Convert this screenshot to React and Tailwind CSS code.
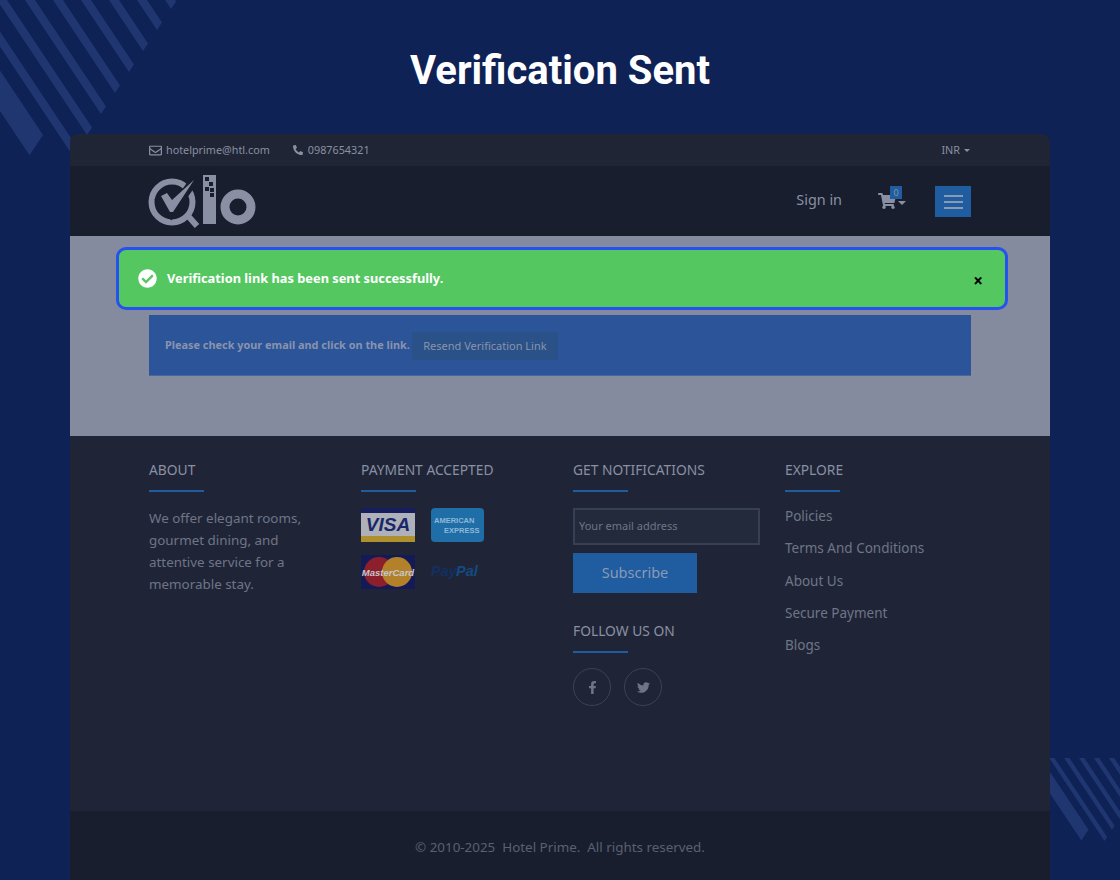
import { FaRegEnvelope, FaPhoneAlt, FaShoppingCart, FaFacebookF, FaTwitter, FaCheckCircle } from 'react-icons/fa'

const bodyFont = { fontFamily: "'Noto Sans', sans-serif" }

// stripes of the corner decoration: [left edge, right edge, end of stripe]
const stripes = [
  [-74, -47, 133],
  [-31, -21, 177],
  [-3, 7, 177],
  [25, 35, 177],
  [53, 63, 177],
  [81, 91, 177],
  [109, 119, 177],
  [137, 147, 177],
  [165, 175, 177],
]

function stripePoints([a, b, end]) {
  const rx = (end + b) / 2
  const ry = ((end - b) * 3) / 4
  const lx = (end + a) / 2
  const ly = ((end - a) * 3) / 4
  return `${a},0 ${b},0 ${rx},${ry} ${lx},${ly}`
}

function Stripes({ className, viewBox }) {
  return (
    <svg className={className} viewBox={viewBox} preserveAspectRatio="none">
      {stripes.map((s) => (
        <polygon key={s[0]} points={stripePoints(s)} fill="#1f3670" />
      ))}
    </svg>
  )
}

function Logo() {
  return (
    <svg width="108" height="53" viewBox="0 0 108 53" className="block">
      <circle cx="24" cy="27" r="20.5" fill="none" stroke="#8a90a3" strokeWidth="6" />
      <path d="M41 42 L49 51" stroke="#8a90a3" strokeWidth="6" />
      <path d="M10 22 L23 38 L47 4" fill="none" stroke="#181e2e" strokeWidth="9" />
      <path d="M13 21 L19 18 L24 25 L46 5 L25 37 L22 37 Z" fill="#8a90a3" />
      <rect x="55" y="0" width="13" height="49" fill="#8a90a3" />
      <rect x="57" y="2" width="4" height="4" fill="#181e2e" />
      <rect x="61" y="7" width="4" height="4" fill="#181e2e" />
      <rect x="57" y="12" width="4" height="4" fill="#181e2e" />
      <rect x="62" y="13" width="4" height="4" fill="#181e2e" />
      <rect x="62" y="18" width="4" height="4" fill="#181e2e" />
      <circle cx="90" cy="32" r="13" fill="none" stroke="#8a90a3" strokeWidth="9" />
    </svg>
  )
}

function Heading({ children }) {
  return (
    <div>
      <h3 className="text-[13.8px] leading-[20px] text-[#8a90a3]">{children}</h3>
      <div className="mt-[10px] h-[2px] w-[55px] bg-[#1f5ca0]" />
    </div>
  )
}

function PaymentCards() {
  return (
    <div className="mt-[16px] grid grid-cols-[54px_54px] gap-x-4 gap-y-[13px]">
      <svg width="54" height="34" viewBox="0 0 54 34">
        <rect width="54" height="34" fill="#aeb1ba" />
        <rect width="54" height="5" fill="#161e5e" />
        <rect y="28" width="54" height="6" fill="#b0902e" />
        <text x="27" y="23" textAnchor="middle" fontFamily="'Liberation Sans', sans-serif" fontWeight="700" fontStyle="italic" fontSize="19" fill="#1a2768">VISA</text>
      </svg>
      <svg width="54" height="34" viewBox="0 0 54 34">
        <rect width="53" height="34" rx="4" fill="#1f6ea8" />
        <text x="3" y="15" fontFamily="'Liberation Sans', sans-serif" fontWeight="700" fontSize="7.5" fill="#8fb8d6">AMERICAN</text>
        <text x="13" y="25" fontFamily="'Liberation Sans', sans-serif" fontWeight="700" fontSize="7.5" fill="#8fb8d6">EXPRESS</text>
      </svg>
      <svg width="54" height="34" viewBox="0 0 54 34">
        <rect width="54" height="34" fill="#141a55" />
        <circle cx="18" cy="17" r="15" fill="#8c1f2c" />
        <circle cx="36" cy="17" r="15" fill="#b3812a" />
        <text x="27" y="21" textAnchor="middle" fontFamily="'Liberation Sans', sans-serif" fontWeight="700" fontStyle="italic" fontSize="9.5" fill="#c6c8cf">MasterCard</text>
      </svg>
      <svg width="54" height="34" viewBox="0 0 54 34">
        <text x="0" y="21" fontFamily="'Liberation Sans', sans-serif" fontWeight="700" fontStyle="italic" fontSize="14.5" fill="#12305f">Pay</text>
        <text x="25" y="21" fontFamily="'Liberation Sans', sans-serif" fontWeight="700" fontStyle="italic" fontSize="14.5" fill="#154a80">Pal</text>
      </svg>
    </div>
  )
}

export default function App() {
  const exploreLinks = ['Policies', 'Terms And Conditions', 'About Us', 'Secure Payment', 'Blogs']

  return (
    <div className="relative flex h-[880px] flex-col overflow-hidden bg-[#0f2255]" style={bodyFont}>
      <Stripes className="absolute left-0 top-0 h-[188px] w-[180px]" viewBox="0 0 180 188" />
      <Stripes className="absolute left-[1050px] top-[758px] h-[100px] w-[70px]" viewBox="-29.5 0 131.6 188" />

      <h1 className="relative pt-[45px] text-center text-[40px] font-bold leading-[52px] text-white" style={{ fontFamily: 'Roboto, sans-serif' }}>
        Verification Sent
      </h1>

      <div className="relative mx-[70px] mt-[37px] flex flex-1 flex-col overflow-hidden rounded-t-lg">
        <div className="flex h-[32px] items-center justify-between bg-[#1f2535] pl-[79px] pr-[80px] text-[10.8px] text-[#8a90a3]">
          <div className="flex items-center gap-[23px]">
            <span className="flex items-center gap-[4px]"><FaRegEnvelope className="text-[13px]" />hotelprime@htl.com</span>
            <span className="flex items-center gap-[5px]"><FaPhoneAlt className="text-[10px]" />0987654321</span>
          </div>
          <span className="flex items-center gap-1">
            INR
            <span className="mt-[1px] border-x-[3.5px] border-t-[3.5px] border-x-transparent border-t-[#8a90a3]" />
          </span>
        </div>

        <div className="flex h-[70px] items-center justify-between bg-[#181e2e] pl-[78px] pr-[79px]">
          <Logo />
          <div className="flex items-center">
            <span className="-mt-[3px] text-[14.4px] text-[#8a90a3]">Sign in</span>
            <div className="relative ml-[36px] flex items-center gap-[2px]">
              <FaShoppingCart className="text-[18px] text-[#8a90a3]" />
              <span className="mt-1 border-x-[4px] border-t-[4px] border-x-transparent border-t-[#8a90a3]" />
              <span className="absolute -top-[6px] left-[12px] flex h-[13px] w-[12px] items-center justify-center bg-[#1f5ca0] text-[9px] text-[#8a90a3]">0</span>
            </div>
            <div className="ml-[29px] mt-[1px] flex h-[31px] w-[36px] flex-col items-center justify-center gap-[4px] bg-[#1f5ca0]">
              <span className="h-[2px] w-[19px] bg-[#8a9ab5]" />
              <span className="h-[2px] w-[19px] bg-[#8a9ab5]" />
              <span className="h-[2px] w-[19px] bg-[#8a9ab5]" />
            </div>
          </div>
        </div>

        <div className="relative h-[200px] bg-[#858b9f] px-[79px] pt-[79px]">
          <div className="absolute left-[46px] top-[11px] flex h-[63px] w-[892px] items-center justify-between rounded-[10px] border-[3px] border-[#2650f0] bg-[#54c761] pl-[19px] pr-[22px]">
            <div className="flex items-center gap-[10px]">
              <FaCheckCircle className="text-[19px] text-white" />
              <span className="text-[12.8px] font-bold text-white">Verification link has been sent successfully.</span>
            </div>
            <span className="mt-[3px] text-[17px] font-bold leading-none text-black">×</span>
          </div>
          <div className="flex h-[61px] items-center gap-[2px] border-b border-[#46689f] bg-[#2c5599] px-[16px]">
            <span className="text-[10.9px] font-bold text-[#8a93ad]">Please check your email and click on the link.</span>
            <span className="mt-[2px] flex h-[28px] w-[146px] items-center justify-center bg-[#2a5188] text-[11px] text-[#8a93ad]">Resend Verification Link</span>
          </div>
        </div>

        <div className="grid h-[375px] grid-cols-[212px_212px_212px_186px] bg-[#1f2537] pl-[79px] pt-[24px] text-[#6f7587]">
          <div>
            <Heading>ABOUT</Heading>
            <p className="mt-[15px] w-[170px] text-[13.4px] leading-[22px]">We offer elegant rooms, gourmet dining, and attentive service for a memorable stay.</p>
          </div>
          <div>
            <Heading>PAYMENT ACCEPTED</Heading>
            <PaymentCards />
          </div>
          <div>
            <Heading>GET NOTIFICATIONS</Heading>
            <div className="mt-[16px] flex h-[37px] w-[187px] items-center border-2 border-[#363f54] bg-[#232a3c] pl-[4px] text-[11px]">Your email address</div>
            <div className="mt-[8px] flex h-[40px] w-[124px] items-center justify-center bg-[#1f5ca0] text-[14.5px] text-[#8a9ab5]">Subscribe</div>
            <div className="mt-[28px]">
              <Heading>FOLLOW US ON</Heading>
            </div>
            <div className="mt-[15px] flex gap-[13px]">
              <span className="flex h-[38px] w-[38px] items-center justify-center rounded-full border border-[#3a4256]"><FaFacebookF className="text-[13px]" /></span>
              <span className="flex h-[38px] w-[38px] items-center justify-center rounded-full border border-[#3a4256]"><FaTwitter className="text-[13px]" /></span>
            </div>
          </div>
          <div>
            <Heading>EXPLORE</Heading>
            <ul className="mt-[8px] text-[13.5px]">
              {exploreLinks.map((link) => (
                <li key={link} className="flex h-[32.25px] items-center">{link}</li>
              ))}
            </ul>
          </div>
        </div>

        <div className="flex flex-1 items-center justify-center bg-[#181e2e] pt-[3px] text-[13.4px] text-[#5a6072]">
          © 2010-2025&nbsp; Hotel Prime.&nbsp; All rights reserved.
        </div>
      </div>
    </div>
  )
}
